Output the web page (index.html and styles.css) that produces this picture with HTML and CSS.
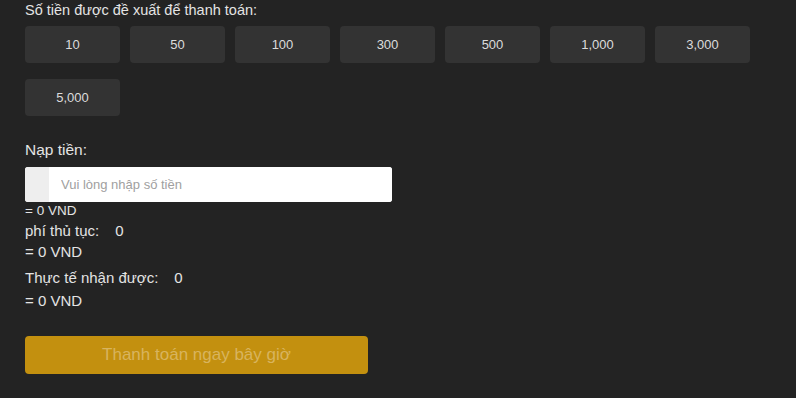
FILE: index.html
```html
<!DOCTYPE html>
<html lang="vi">
<head>
  <meta charset="UTF-8" />
  <meta name="viewport" content="width=device-width, initial-scale=1.0"/>
  <title>Nạp tiền</title>
  <link rel="stylesheet" href="styles.css">
</head>
<body>
  <div class="deposit">
    <p class="section-title">Số tiền được đề xuất để thanh toán:</p>

    <!-- Suggested amounts -->
    <div class="amount-list">
      <button class="amount">10</button>
      <button class="amount">50</button>
      <button class="amount">100</button>
      <button class="amount">300</button>
      <button class="amount">500</button>
      <button class="amount">1,000</button>
      <button class="amount">3,000</button>
      <button class="amount">5,000</button>
    </div>

    <!-- Amount input -->
    <p class="field-label">Nạp tiền:</p>
    <div class="input-group">
      <span class="input-addon"></span>
      <input type="text" class="amount-input" placeholder="Vui lòng nhập số tiền">
    </div>
    <div class="convert small">= 0 VND</div>

    <div class="info-line">phí thủ tục:<span class="info-value">0</span></div>
    <div class="convert">= 0 VND</div>

    <div class="info-line received">Thực tế nhận được:<span class="info-value">0</span></div>
    <div class="convert last">= 0 VND</div>

    <button class="pay-button" disabled>Thanh toán ngay bây giờ</button>
  </div>
</body>
</html>
```

FILE: styles.css
```css
body {
  margin: 0;
  padding: 0;
  background: #232323;
  color: #e4e4e4;
  font-family: 'Liberation Sans', Arial, sans-serif;
}

.deposit {
  padding: 0 25px;
}

.section-title {
  margin: 0;
  font-size: 14.5px;
  line-height: 20px;
}

.amount-list {
  display: grid;
  grid-template-columns: repeat(7, 95px);
  column-gap: 10px;
  row-gap: 16px;
  margin-top: 6px;
}

.amount {
  height: 37px;
  border: none;
  border-radius: 4px;
  background-color: #333333;
  color: #dcdcdc;
  font-family: inherit;
  font-size: 13px;
  cursor: pointer;
}

.amount:hover {
  background-color: #3d3d3d;
}

.field-label {
  margin: 24px 0 0;
  font-size: 15.5px;
  line-height: 20px;
}

.input-group {
  display: flex;
  width: 367px;
  height: 35px;
  margin-top: 7px;
  border-radius: 3px;
  overflow: hidden;
  background: #fff;
}

.input-addon {
  width: 24px;
  background: #eeeeee;
}

.amount-input {
  flex: 1;
  border: none;
  outline: none;
  padding: 0 12px;
  font-family: inherit;
  font-size: 13px;
  color: #333;
}

.amount-input::placeholder {
  color: #a0a0a0;
}

.convert {
  font-size: 15px;
  line-height: 21px;
}

.convert.small {
  font-size: 13.5px;
  line-height: 16px;
  margin-top: 1px;
}

.convert.last {
  margin-top: 2px;
}

.info-line {
  font-size: 15px;
  line-height: 21px;
  margin-top: 1px;
}

.info-line.received {
  margin-top: 5px;
}

.info-value {
  margin-left: 16px;
}

.pay-button {
  display: block;
  width: 343px;
  height: 38px;
  margin-top: 25px;
  border: none;
  border-radius: 4px;
  background-color: #c3900f;
  color: #d8b45e;
  font-family: inherit;
  font-size: 17px;
}
```
